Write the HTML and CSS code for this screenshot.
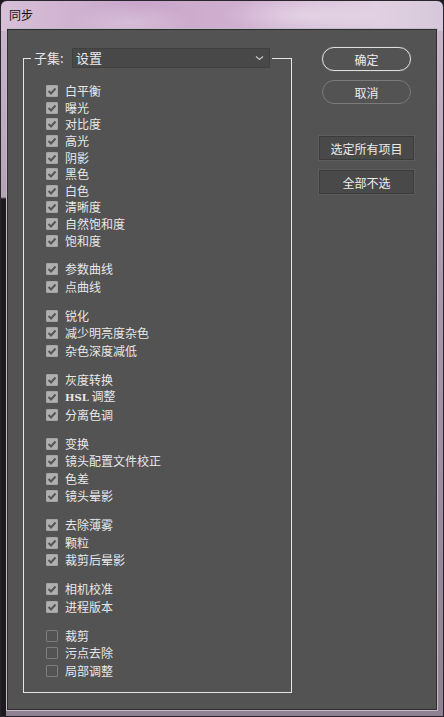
FILE: index.html
```html
<!DOCTYPE html>
<html lang="zh-CN">
<head>
    <meta charset="UTF-8">
    <meta name="viewport" content="width=device-width, initial-scale=1.0">
    <title>同步</title>
    <link rel="stylesheet" href="styles.css">
</head>
<body>
    <div class="window">
        <div class="titlebar">同步</div>
        <div class="client">
            <fieldset class="subset">
                <legend class="subset-head">
                    <span class="subset-label">子集:</span>
                    <span class="select">设置
                        <svg class="chevron" width="9" height="6" viewBox="0 0 9 6"><path d="M1 1.5 L4.5 4.5 L8 1.5" fill="none" stroke="#c8c8c8" stroke-width="1.2"/></svg>
                    </span>
                </legend>
                <div class="group group-main">
                    <div class="item"><span class="box on"></span><span class="label">白平衡</span></div>
                    <div class="item"><span class="box on"></span><span class="label">曝光</span></div>
                    <div class="item"><span class="box on"></span><span class="label">对比度</span></div>
                    <div class="item"><span class="box on"></span><span class="label">高光</span></div>
                    <div class="item"><span class="box on"></span><span class="label">阴影</span></div>
                    <div class="item"><span class="box on"></span><span class="label">黑色</span></div>
                    <div class="item"><span class="box on"></span><span class="label">白色</span></div>
                    <div class="item"><span class="box on"></span><span class="label">清晰度</span></div>
                    <div class="item"><span class="box on"></span><span class="label">自然饱和度</span></div>
                    <div class="item"><span class="box on"></span><span class="label">饱和度</span></div>
                </div>
                <div class="group">
                    <div class="item"><span class="box on"></span><span class="label">参数曲线</span></div>
                    <div class="item"><span class="box on"></span><span class="label">点曲线</span></div>
                </div>
                <div class="group">
                    <div class="item"><span class="box on"></span><span class="label">锐化</span></div>
                    <div class="item"><span class="box on"></span><span class="label">减少明亮度杂色</span></div>
                    <div class="item"><span class="box on"></span><span class="label">杂色深度减低</span></div>
                </div>
                <div class="group">
                    <div class="item"><span class="box on"></span><span class="label">灰度转换</span></div>
                    <div class="item"><span class="box on"></span><span class="label"><span class="latin">HSL</span> 调整</span></div>
                    <div class="item"><span class="box on"></span><span class="label">分离色调</span></div>
                </div>
                <div class="group">
                    <div class="item"><span class="box on"></span><span class="label">变换</span></div>
                    <div class="item"><span class="box on"></span><span class="label">镜头配置文件校正</span></div>
                    <div class="item"><span class="box on"></span><span class="label">色差</span></div>
                    <div class="item"><span class="box on"></span><span class="label">镜头晕影</span></div>
                </div>
                <div class="group">
                    <div class="item"><span class="box on"></span><span class="label">去除薄雾</span></div>
                    <div class="item"><span class="box on"></span><span class="label">颗粒</span></div>
                    <div class="item"><span class="box on"></span><span class="label">裁剪后晕影</span></div>
                </div>
                <div class="group">
                    <div class="item"><span class="box on"></span><span class="label">相机校准</span></div>
                    <div class="item"><span class="box on"></span><span class="label">进程版本</span></div>
                </div>
                <div class="group">
                    <div class="item"><span class="box"></span><span class="label">裁剪</span></div>
                    <div class="item"><span class="box"></span><span class="label">污点去除</span></div>
                    <div class="item"><span class="box"></span><span class="label">局部调整</span></div>
                </div>
            </fieldset>
            <div class="actions">
                <button class="pill primary">确定</button>
                <button class="pill">取消</button>
                <button class="flat first">选定所有项目</button>
                <button class="flat">全部不选</button>
            </div>
        </div>
    </div>
    <script>
        // draw the tick into every checked box
        const tick = '<svg width="12" height="12" viewBox="0 0 12 12"><path d="M2.5 6 L5 8.5 L9.5 3.5" fill="none" stroke="#555" stroke-width="2"/></svg>';
        document.querySelectorAll('.box.on').forEach(b => { b.innerHTML = tick; });
    </script>
</body>
</html>
```

FILE: styles.css
```css
body {
    margin: 0;
    background: #1c1a1e;
    font-family: "Noto Sans CJK SC", "Liberation Sans", sans-serif;
    font-size: 12px;
}
.window {
    width: 444px;
    height: 717px;
    box-sizing: border-box;
    display: flex;
    flex-direction: column;
    padding: 0 6px 6px 6px;
    border: 1px solid #2a242c;
    border-radius: 7px 7px 0 0;
    background:
        linear-gradient(to bottom, transparent 196px, #1e1b20 198px) left top / 5px 100% no-repeat,
        radial-gradient(ellipse 60px 20px at 130px 22px, rgba(255,255,255,0.25), transparent),
        radial-gradient(ellipse 80px 18px at 300px 14px, rgba(255,255,255,0.3), transparent),
        linear-gradient(90deg, #d7c0d8 0%, #c9a6ca 30%, #d0b0d0 55%, #e0d0e2 85%, #d6c8da 100%) left top / 100% 30px no-repeat,
        linear-gradient(to bottom, #cdb8cf 0%, #a999ad 40%, #8e8292 100%);
}
.titlebar {
    height: 28px;
    padding-left: 2px;
    line-height: 27px;
    color: #111;
}
.client {
    flex: 1;
    display: flex;
    align-items: flex-start;
    gap: 27px;
    padding: 17px 0 0 15px;
    background: #535353;
    border: 1px solid #2e2e2e;
    box-shadow: 0 0 0 1px #c4bcc6;
}
.subset {
    margin: 1px 0 0 0;
    width: 269px;
    height: 645px;
    box-sizing: border-box;
    padding: 15px 10px 0 22px;
    border: 1px solid #e6e6e6;
}
.subset-head {
    display: flex;
    align-items: center;
    margin-left: -15px;
    padding: 0 2px 0 3px;
    color: #e6e6e6;
}
.subset-label {
    width: 38px;
    font-size: 13px;
    line-height: 16px;
}
.select {
    width: 198px;
    height: 20px;
    box-sizing: border-box;
    display: flex;
    align-items: center;
    justify-content: space-between;
    padding: 0 5px 0 3px;
    background: #484848;
    border: 1px solid #404040;
    color: #ececec;
    font-size: 13px;
    line-height: 16px;
}
.group {
    margin-top: 11.5px;
}
.group-main {
    margin-top: 0;
}
.item {
    display: flex;
    align-items: center;
    gap: 7px;
    height: 17.5px;
    color: #e8e8e8;
    white-space: nowrap;
}
.group-main .item {
    height: 16.6px;
}
.label {
    font-size: 12px;
    line-height: 14px;
}
.latin {
    font-family: "DejaVu Serif", serif;
    font-size: 10px;
    font-weight: bold;
}
.box {
    width: 12px;
    height: 12px;
    box-sizing: border-box;
    flex: none;
    border: 1px solid #7c7c7c;
    border-radius: 1px;
}
.box.on {
    background: #b0b0b0;
    border-color: #a4a4a4;
}
.box svg {
    display: block;
    margin: -1px;
}
.actions {
    width: 95px;
    display: flex;
    flex-direction: column;
    align-items: center;
}
button {
    font-family: inherit;
    font-size: 12px;
    color: #ececec;
    cursor: pointer;
    padding: 0;
}
.pill {
    width: 89px;
    height: 24px;
    border-radius: 12px;
    background: transparent;
    border: 1px solid #7a7a7a;
}
.pill.primary {
    border-color: #dedede;
    box-shadow: 0 0 1px #aaa;
}
.pill + .pill {
    margin-top: 9px;
}
.flat {
    width: 95px;
    height: 24px;
    margin-top: 10px;
    background: #494949;
    border: 1px solid #3b3b3b;
    box-shadow: 0 0 0 1px #5d5d5d;
}
.flat.first {
    margin-top: 32px;
}
```
